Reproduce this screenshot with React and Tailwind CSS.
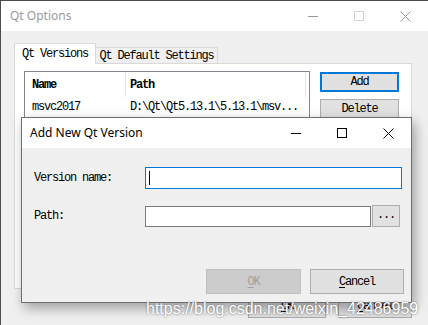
const mono = "font-['Liberation_Mono',monospace] text-[12px] tracking-[-1.2px] leading-none";
const ui = "font-['Noto_Sans','Liberation_Sans',sans-serif] text-[12px] leading-none";

function Caption({ dim }) {
  const c = dim ? '#9a9a9a' : '#000000';
  return (
    <div className="ml-auto flex h-full">
      <div className="w-[46px] h-full flex items-center justify-center">
        <svg width="10" height="10" viewBox="0 0 10 10">
          <line x1="0" y1="5.5" x2="10" y2="5.5" stroke={c} strokeWidth="1" />
        </svg>
      </div>
      <div className="w-[46px] h-full flex items-center justify-center">
        <svg width="10" height="10" viewBox="0 0 10 10">
          <rect x="0.5" y="0.5" width="9" height="9" fill="none" stroke={dim ? '#d0d0d0' : c} strokeWidth="1" />
        </svg>
      </div>
      <div className="w-[46px] h-full flex items-center justify-center">
        <svg width="11" height="11" viewBox="0 0 11 11">
          <path d="M0.5 0.5 L10.5 10.5 M10.5 0.5 L0.5 10.5" stroke={c} strokeWidth="1" />
        </svg>
      </div>
    </div>
  );
}

export default function App() {
  return (
    <div className="w-[428px] h-[325px] relative overflow-hidden bg-[#f0f0f0] border-l border-t border-[#4d4d4d]">
      {/* outer window title */}
      <div className="h-[30px] bg-white flex items-center">
        <span className={`${ui} pl-[9px] text-[#9a9a9a]`}>Qt Options</span>
        <Caption dim />
      </div>

      <div className="pl-[13px] pt-[12px] pr-[16px]">
        <div className="flex items-end relative z-10 -mb-px">
          <div className={`${mono} w-[82px] h-[21px] bg-white border border-b-0 border-[#d9d9d9] flex items-center justify-center text-black`}>
            Qt Versions
          </div>
          <div className={`${mono} w-[122px] h-[16px] mb-px bg-[#f0f0f0] border border-b-0 border-l-0 border-[#d9d9d9] flex items-center justify-center text-black`}>
            Qt Default Settings
          </div>
        </div>

        <div className="w-[398px] h-[226px] border border-[#d9d9d9] bg-white flex pt-[7px] pl-[9px] gap-[10px]">
          <div className="w-[286px] h-[170px] border border-[#828790] bg-white">
            <div className="flex h-[25px]">
              <div className={`${mono} w-[100px] pl-[7px] flex items-center font-bold text-black`}>Name</div>
              <div className={`${mono} w-[181px] pl-[4px] flex items-center font-bold text-black border-l border-r border-[#e5e5e5]`}>Path</div>
            </div>
            <div className="flex h-[19px]">
              <div className={`${mono} w-[100px] pl-[7px] flex items-center text-black`}>msvc2017</div>
              <div className={`${mono} pl-[5px] flex items-center text-black`}>D:\Qt\Qt5.13.1\5.13.1\msv...</div>
            </div>
          </div>
          <div className="flex flex-col gap-[7px] pt-px">
            <div className={`${mono} w-[79px] h-[20px] bg-[#e1e1e1] border-2 border-[#0078d7] flex items-center justify-center text-black`}>Add</div>
            <div className={`${mono} w-[79px] h-[20px] bg-[#e1e1e1] border border-[#adadad] flex items-center justify-center text-black`}>Delete</div>
          </div>
        </div>

        <div className="flex justify-end gap-[12px] mt-[4px]">
          <div className={`${mono} w-[78px] h-[25px] bg-[#e1e1e1] border border-[#adadad] flex items-center justify-center text-black`}>
            <span className="underline underline-offset-2">O</span>K
          </div>
          <div className={`${mono} w-[74px] h-[25px] bg-[#e1e1e1] border border-[#adadad] flex items-center justify-center text-black`}>
            <span className="underline underline-offset-2">C</span>ancel
          </div>
        </div>
      </div>

      {/* modal dialog */}
      <div className="absolute left-[20px] top-[116px] w-[391px] h-[186px] border border-[#6e6e6e] bg-[#f0f0f0] flex flex-col shadow-[3px_5px_12px_rgba(0,0,0,0.35)]">
        <div className="h-[30px] bg-white flex items-center">
          <span className={`${ui} pl-[8px] text-black`}>Add New Qt Version</span>
          <Caption />
        </div>
        <div className="flex-1 flex flex-col pl-[12px] pr-[7px] pt-[19px] pb-[8px]">
          <div className="flex items-center h-[22px]">
            <div className={`${mono} w-[111px] text-black`}>Version name:</div>
            <div className="w-[257px] h-[22px] border border-[#0078d7] bg-white relative">
              <div className="absolute left-[3px] top-[3px] w-px h-[14px] bg-black" />
            </div>
          </div>
          <div className="flex items-center h-[22px] mt-[16px]">
            <div className={`${mono} w-[111px] text-black`}>Path:</div>
            <div className="w-[226px] h-[21px] border border-[#7a7a7a] bg-white" />
            <div className={`${mono} ml-px w-[28px] h-[22px] bg-[#e1e1e1] border border-[#adadad] flex items-end justify-center pb-[5px] text-black`}>...</div>
          </div>
          <div className="mt-auto flex justify-end gap-[9px]">
            <div className={`${mono} w-[95px] h-[25px] bg-[#cccccc] border border-[#bfbfbf] flex items-center justify-center text-[#a0a0a0]`}>
              <span className="underline underline-offset-2">O</span>K
            </div>
            <div className={`${mono} w-[94px] h-[25px] bg-[#e1e1e1] border border-[#adadad] flex items-center justify-center text-black`}>
              <span className="underline underline-offset-2">C</span>ancel
            </div>
          </div>
        </div>
      </div>

      <div className="absolute left-[145px] top-[299px] font-['Liberation_Sans',sans-serif] text-[16px] leading-[18px] text-white [text-shadow:0_0_2px_rgba(0,0,0,0.55)]">
        https://blog.csdn.net/weixin_42486959
      </div>
    </div>
  );
}
